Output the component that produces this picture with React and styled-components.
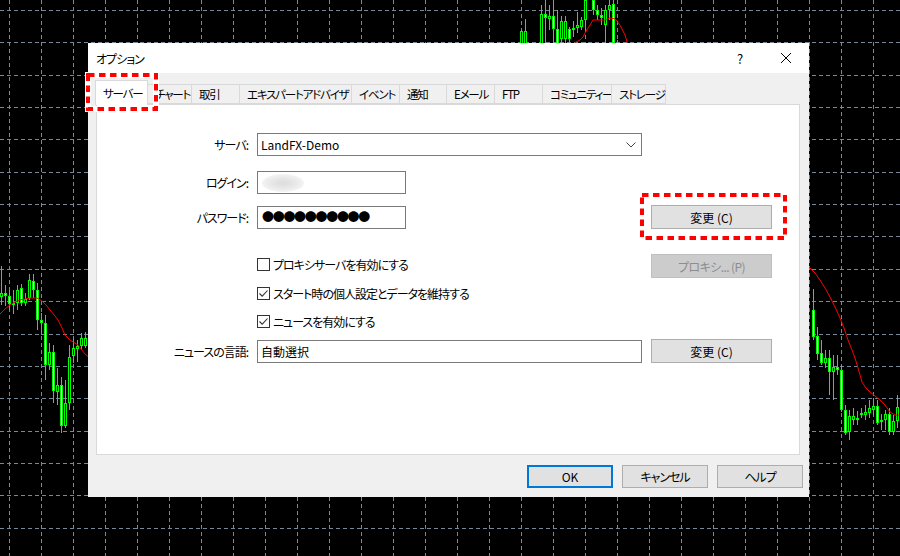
import React from 'react';
import styled, { createGlobalStyle } from 'styled-components';

const GlobalStyle = createGlobalStyle`
  html, body { margin: 0; padding: 0; background: #000; }
  body { font-family: "Noto Sans CJK JP", "Noto Sans", sans-serif; font-size: 12px; }
  * { box-sizing: border-box; }
`;

// chart data: [x, high, low, bodyTop, bodyBottom, bear]
const candles = [
    [1, 266, 305, 293, 297, 0], [5, 285, 306, 293, 296, 1], [9, 290, 310, 296, 304, 1],
    [13, 290, 314, 303, 305, 0], [17, 285, 310, 290, 303, 0], [21, 284, 306, 288, 303, 1],
    [25, 293, 306, 299, 303, 0], [29, 274, 300, 280, 298, 0], [33, 274, 298, 281, 290, 1],
    [37, 283, 330, 290, 320, 1], [41, 313, 335, 320, 323, 1], [45, 315, 380, 323, 365, 1],
    [49, 343, 370, 352, 365, 0], [53, 345, 403, 352, 391, 1], [57, 368, 405, 385, 392, 0],
    [61, 377, 433, 385, 426, 1], [65, 380, 428, 403, 426, 0], [69, 345, 410, 357, 403, 0],
    [73, 338, 363, 348, 356, 0], [77, 340, 362, 346, 349, 0], [81, 333, 350, 338, 346, 0],
    [85, 332, 348, 338, 346, 0],
    [521, 29, 50, 31, 50, 0], [525, 19, 50, 31, 50, 0], [541, 5, 50, 14, 50, 0],
    [545, 0, 50, 14, 18, 1], [549, 5, 30, 16, 19, 0], [553, 0, 50, 16, 29, 1],
    [557, 10, 50, 29, 50, 1], [561, 16, 50, 21, 39, 0], [565, 16, 50, 21, 39, 0],
    [569, 27, 50, 29, 39, 1], [573, 21, 37, 28, 30, 0], [577, 12, 33, 25, 28, 0],
    [581, 17, 30, 20, 27, 0], [585, 0, 30, 0, 20, 0], [593, 0, 15, 0, 10, 1],
    [597, 5, 20, 10, 15, 1], [601, 8, 25, 15, 18, 1], [605, 5, 50, 10, 25, 0],
    [609, 0, 20, 5, 10, 0], [613, 0, 50, 4, 43, 1], [617, 40, 50, 43, 50, 1],
    [813, 289, 340, 310, 337, 1], [817, 327, 360, 336, 354, 1], [821, 340, 365, 353, 363, 1],
    [825, 350, 368, 358, 363, 0], [829, 350, 395, 358, 372, 1], [833, 355, 400, 367, 372, 0],
    [837, 355, 375, 367, 370, 1], [841, 365, 412, 370, 410, 1], [845, 405, 435, 410, 433, 1],
    [849, 410, 440, 416, 432, 0], [853, 408, 425, 416, 420, 0], [857, 411, 425, 418, 420, 0],
    [861, 408, 418, 413, 415, 0], [865, 405, 420, 412, 415, 0], [869, 400, 418, 408, 413, 0],
    [873, 398, 415, 406, 410, 0], [877, 400, 425, 406, 423, 1], [881, 414, 430, 420, 422, 0],
    [885, 410, 430, 414, 420, 0], [889, 408, 435, 414, 432, 1], [893, 415, 435, 421, 432, 0],
    [897, 395, 428, 407, 421, 0],
];

const maLines = [
    '0,314 5,309 10,305 15,302 20,300 30,298 37,298 42,301 46,305 50,310 55,316 58,320 62,328 65,335 70,340 78,345 85,354 90,358',
    '572,45 576,42 580,40 583,37 585,33 588,28 590,25 593,20 605,20 610,18 615,19 620,25 625,35 628,45',
    '808,266 810,268 815,273 820,280 825,288 830,297 835,307 840,318 844,328 848,340 852,350 855,358 858,368 862,382 866,388 870,392 875,396 880,400 885,405 890,412 895,415 900,415',
];

const tabs = [
    { label: 'サーバー', w: 53, active: true },
    { label: 'チャート', w: 45 },
    { label: '取引', w: 49 },
    { label: 'エキスパートアドバイザ', w: 113 },
    { label: 'イベント', w: 49 },
    { label: '通知', w: 48 },
    { label: 'Eメール', w: 49 },
    { label: 'FTP', w: 49 },
    { label: 'コミュニティー', w: 70 },
    { label: 'ストレージ', w: 55 },
];

const Screen = styled.div`
    position: relative;
    width: 900px;
    height: 556px;
    overflow: hidden;
    background: #000;
`;

const ChartLayer = styled.svg`
    position: absolute;
    inset: 0;
`;

const Dialog = styled.div`
    position: absolute;
    left: 88px;
    top: 43px;
    width: 721px;
    height: 454px;
    display: flex;
    flex-direction: column;
    background: #f0f0f0;
    color: #000;
    font-family: "Noto Sans CJK JP", "Noto Sans", sans-serif;
    font-size: 12px;
    font-feature-settings: "palt";
    letter-spacing: -1px;
`;

const TitleBar = styled.div`
    height: 30px;
    display: flex;
    align-items: center;
    padding-left: 8px;
    background: #fff;
`;

const Title = styled.span`
    flex: 1;
`;

const TitleButton = styled.div`
    width: 46px;
    height: 30px;
    display: flex;
    align-items: center;
    justify-content: center;
    font-size: 13px;
    letter-spacing: 0;
`;

const TabStrip = styled.div`
    display: flex;
    align-items: flex-end;
    height: 24px;
    margin-top: 7px;
    padding-left: 7px;
    position: relative;
    z-index: 2;
`;

const Tab = styled.div`
    position: relative;
    width: ${(p) => p.$w}px;
    height: ${(p) => (p.$active ? 25 : 20)}px;
    margin-left: -1px;
    margin-bottom: ${(p) => (p.$active ? -1 : 0)}px;
    padding-left: 7px;
    display: flex;
    align-items: center;
    white-space: nowrap;
    font-size: 11.5px;
    letter-spacing: -1.2px;
    border: 1px solid #d9d9d9;
    border-bottom: ${(p) => (p.$active ? 'none' : '1px solid #d9d9d9')};
    background: ${(p) => (p.$active ? '#fff' : '#f0f0f0')};
    z-index: ${(p) => (p.$active ? 3 : 1)};
    &:first-child { margin-left: 0; }
`;

const Panel = styled.div`
    height: 351px;
    margin: 0 9px 0 8px;
    border: 1px solid #d9d9d9;
    background: #fff;
    padding-top: 28px;
    display: flex;
    flex-direction: column;
`;

const Row = styled.div`
    display: grid;
    grid-template-columns: 151px 385px 121px;
    column-gap: 9px;
    align-items: ${(p) => p.$align || 'center'};
    margin-top: ${(p) => p.$mt || 0}px;
`;

const Label = styled.div`
    text-align: right;
    white-space: nowrap;
`;

const Field = styled.div`
    width: ${(p) => p.$w || 385}px;
    height: 23px;
    border: 1px solid #7a7a7a;
    background: #fff;
    display: flex;
    align-items: center;
    padding-left: 3px;
    padding-right: 5px;
`;

const FieldText = styled.span`
    flex: 1;
    white-space: nowrap;
    letter-spacing: ${(p) => p.$ls ?? -1}px;
`;

const Blur = styled.span`
    width: 42px;
    height: 18px;
    margin-left: 1px;
    border-radius: 50%;
    background: radial-gradient(ellipse at center, #dcdcdc 0%, #e6e6e6 35%, #f1f1f1 65%, #fafafa 85%);
`;

const Dots = styled.span`
    font-feature-settings: normal;
    font-size: 12px;
    letter-spacing: -1.3px;
    line-height: 1;
    margin-left: 1px;
`;

const Button = styled.div`
    position: relative;
    width: ${(p) => p.$w || 121}px;
    height: ${(p) => p.$h || 24}px;
    display: flex;
    align-items: center;
    justify-content: center;
    letter-spacing: ${(p) => p.$ls ?? -1}px;
    background: ${(p) => (p.$disabled ? '#cccccc' : '#e1e1e1')};
    border: ${(p) => (p.$primary ? '2px solid #0078d7' : `1px solid ${p.$disabled ? '#bfbfbf' : '#adadad'}`)};
    color: ${(p) => (p.$disabled ? '#8d8d8d' : '#000')};
    white-space: pre;
`;

const CheckRow = styled.label`
    height: 20px;
    display: flex;
    align-items: center;
    gap: 3px;
    white-space: nowrap;
`;

const Box = styled.span`
    width: 13px;
    height: 13px;
    border: 1px solid #333;
    background: #fff;
    display: flex;
    align-items: center;
    justify-content: center;
`;

const Footer = styled.div`
    flex: 1;
    display: flex;
    justify-content: flex-end;
    align-items: flex-start;
    gap: 9px;
    padding-top: 10px;
    padding-right: 6px;
`;

const Mark = styled.svg`
    position: absolute;
    left: ${(p) => p.$l}px;
    top: ${(p) => p.$t}px;
    overflow: visible;
    pointer-events: none;
    z-index: 10;
`;

function Annotation({ l, t, w, h }) {
    return (
        <Mark $l={l} $t={t} width={w} height={h}>
            <rect x="2" y="2" width={w - 4} height={h - 4} fill="none" stroke="#fff" strokeWidth="6" />
            <rect x="2" y="2" width={w - 4} height={h - 4} fill="none" stroke="#ff0000" strokeWidth="4" strokeDasharray="6.5 4.5" />
        </Mark>
    );
}

function Check({ on }) {
    return (
        <Box>
            {on && (
                <svg width="11" height="11" viewBox="0 0 11 11">
                    <path d="M1.5 5.5 L4.2 8.2 L9.5 2.5" fill="none" stroke="#333" strokeWidth="1.1" />
                </svg>
            )}
        </Box>
    );
}

function Chart() {
    const vx = Array.from({ length: 28 }, (_, k) => 9.5 + 32 * k);
    const hy = Array.from({ length: 17 }, (_, k) => Math.round(10 + 32.35 * k) + 0.5);
    return (
        <ChartLayer width="900" height="556" viewBox="0 0 900 556">
            {vx.map((x) => (
                <line key={'v' + x} x1={x} x2={x} y1="0" y2="556" stroke="#778899" strokeDasharray="4 3" />
            ))}
            {hy.map((y) => (
                <line key={'h' + y} x1="0" x2="900" y1={y} y2={y} stroke="#778899" strokeDasharray="4 3" />
            ))}
            {candles.map(([x, hi, lo, top, bot, bear]) => (
                <g key={'c' + x}>
                    <line x1={x + 0.5} x2={x + 0.5} y1={hi} y2={lo} stroke="#00ff00" />
                    <rect x={x - 1} y={top} width="3" height={Math.max(1, bot - top)} fill="#00ff00" />
                    {bot - top > 2 && (
                        <rect x={x} y={top + 1} width="1" height={bot - top - 2} fill={bear ? '#fff' : '#000'} />
                    )}
                </g>
            ))}
            {maLines.map((pts, i) => (
                <polyline key={'m' + i} points={pts} fill="none" stroke="#ff0000" strokeWidth="1" />
            ))}
        </ChartLayer>
    );
}

export default function App() {
    return (
        <Screen>
            <GlobalStyle />
            <Chart />
            <Dialog>
                <TitleBar>
                    <Title>オプション</Title>
                    <TitleButton>?</TitleButton>
                    <TitleButton>
                        <svg width="12" height="12" viewBox="0 0 12 12">
                            <path d="M1 1 L11 11 M11 1 L1 11" stroke="#000" strokeWidth="1" />
                        </svg>
                    </TitleButton>
                </TitleBar>
                <TabStrip>
                    {tabs.map((t) => (
                        <Tab key={t.label} $w={t.w} $active={t.active}>
                            {t.label}
                            {t.active && <Annotation l={-10} t={-8} w={72} h={38} />}
                        </Tab>
                    ))}
                </TabStrip>
                <Panel>
                    <Row>
                        <Label>サーバ:</Label>
                        <Field>
                            <FieldText $ls={0}>LandFX-Demo</FieldText>
                            <svg width="10" height="6" viewBox="0 0 10 6">
                                <path d="M0.5 0.5 L5 5 L9.5 0.5" fill="none" stroke="#444" strokeWidth="1" />
                            </svg>
                        </Field>
                    </Row>
                    <Row $mt={15}>
                        <Label>ログイン:</Label>
                        <Field $w={149}>
                            <Blur />
                        </Field>
                    </Row>
                    <Row $mt={11}>
                        <Label>パスワード:</Label>
                        <Field $w={149}>
                            <Dots>●●●●●●●●●●</Dots>
                        </Field>
                        <Button $ls={0}>
                            変更 (C)
                            <Annotation l={-12} t={-13} w={147} h={47} />
                        </Button>
                    </Row>
                    <Row $mt={25} $align="start">
                        <span />
                        <CheckRow>
                            <Check />
                            プロキシサーバを有効にする
                        </CheckRow>
                        <Button $disabled $ls={-0.6}>プロキシ... (P)</Button>
                    </Row>
                    <Row $mt={5}>
                        <span />
                        <CheckRow>
                            <Check on />
                            スタート時の個人設定とデータを維持する
                        </CheckRow>
                    </Row>
                    <Row $mt={8}>
                        <span />
                        <CheckRow>
                            <Check on />
                            ニュースを有効にする
                        </CheckRow>
                    </Row>
                    <Row $mt={8}>
                        <Label>ニュースの言語:</Label>
                        <Field>
                            <FieldText $ls={0}>自動選択</FieldText>
                        </Field>
                        <Button $ls={0}>変更 (C)</Button>
                    </Row>
                </Panel>
                <Footer>
                    <Button $w={86} $h={23} $primary $ls={0}>OK</Button>
                    <Button $w={86} $h={23}>キャンセル</Button>
                    <Button $w={86} $h={23}>ヘルプ</Button>
                </Footer>
            </Dialog>
        </Screen>
    );
}
